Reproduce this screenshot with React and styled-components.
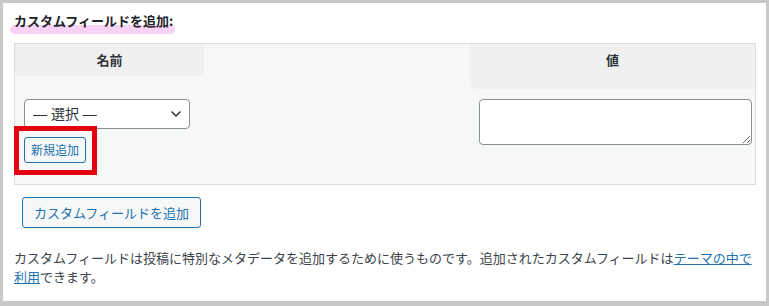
import React from 'react';
import styled, { createGlobalStyle } from 'styled-components';

const GlobalStyle = createGlobalStyle`
	html, body {
		margin: 0;
		padding: 0;
		background: #c8c8c8;
	}
	body {
		font-family: "Noto Sans CJK JP", "Noto Sans", sans-serif;
		color: #3c434a;
	}
`;

const Frame = styled.div`
	width: 769px;
	height: 306px;
	box-sizing: border-box;
	padding: 3px 3px 5px 3px;
`;

const Panel = styled.div`
	background: #fff;
	height: 100%;
	box-sizing: border-box;
	padding: 8px 10px 0 11px;
`;

const Title = styled.h4`
	position: relative;
	width: fit-content;
	margin: 0 0 13px 0;
	font-size: 13px;
	line-height: 19px;
	font-weight: 700;
	color: #1d2327;

	&::before {
		content: "";
		position: absolute;
		left: -4px;
		right: -2px;
		top: 14px;
		height: 9px;
		border-radius: 5px;
		background: #f9d3f6;
		z-index: 0;
	}

	span {
		position: relative;
		z-index: 1;
	}
`;

const Table = styled.div`
	display: grid;
	grid-template-columns: 189px 1fr 285px;
	border: 1px solid #dcdcde;
	background: #f6f7f7;
`;

const HeadCell = styled.div`
	height: ${(p) => p.$h}px;
	background: #f0f0f1;
	border-radius: ${(p) => (p.$wide ? '0 0 0 6px' : '0 0 4px 0')};
	text-align: center;
	line-height: 32px;
	font-size: 13px;
	font-weight: 700;
	color: #2c3338;
`;

const Spacer = styled.div``;

const BodyCell = styled.div`
	position: relative;
	padding: ${(p) => (p.$right ? '10px 3px 0 9px' : '10px 0 21px 9px')};
	display: flex;
	flex-direction: column;
	align-items: flex-start;
`;

const SelectWrap = styled.div`
	position: relative;
	width: 166px;
	height: 30px;

	svg {
		position: absolute;
		right: 8px;
		top: 9px;
		pointer-events: none;
	}
`;

const Select = styled.select`
	appearance: none;
	width: 100%;
	height: 100%;
	box-sizing: border-box;
	border: 1px solid #8c8f94;
	border-radius: 4px;
	background: #fff;
	padding: 0 24px 0 8px;
	font-family: "Liberation Sans", "Noto Sans CJK JP", sans-serif;
	font-size: 14px;
	color: #2c3338;
	outline: none;
`;

const Button = styled.button`
	font-family: inherit;
	font-size: ${(p) => (p.$small ? '12px' : '13px')};
	height: ${(p) => (p.$small ? '26px' : '31px')};
	padding: ${(p) => (p.$small ? '0 6px' : '0 11px')};
	margin-top: ${(p) => (p.$small ? '8px' : '0')};
	border: 1px solid #2271b1;
	border-radius: 3px;
	background: #f6f7f7;
	color: #2271b1;
	line-height: 1;
	cursor: pointer;
`;

const TextArea = styled.textarea`
	width: 100%;
	height: 46px;
	box-sizing: border-box;
	border: 1px solid #8c8f94;
	border-radius: 4px;
	background: #fff;
	font-family: inherit;
	font-size: 14px;
	padding: 4px 8px;
	margin: 0;
	display: block;
`;

const Highlight = styled.div`
	position: absolute;
	left: -1px;
	top: 37px;
	width: 83px;
	height: 49px;
	box-sizing: border-box;
	border: 5px solid #e5000f;
	pointer-events: none;
`;

const AddRow = styled.div`
	padding: 12px 0 0 8px;
`;

const Note = styled.p`
	margin: 20px 0 0 0;
	font-size: 13px;
	line-height: 19px;
	color: #3c434a;

	a {
		color: #2271b1;
		text-decoration: underline;
	}
`;

const Chevron = () => (
	<svg width="12" height="12" viewBox="0 0 12 12" fill="none">
		<path d="M2 4l4 4 4-4" stroke="#2c3338" strokeWidth="1.6" strokeLinecap="round" strokeLinejoin="round" />
	</svg>
);

const App = () => {
	return (
		<>
			<GlobalStyle />
			<Frame>
				<Panel>
					<Title><span>カスタムフィールドを追加:</span></Title>
					<Table>
						<HeadCell $h={32}>名前</HeadCell>
						<Spacer />
						<HeadCell $h={45} $wide>値</HeadCell>

						<BodyCell>
							<SelectWrap>
								<Select defaultValue="">
									<option value="">— 選択 —</option>
								</Select>
								<Chevron />
							</SelectWrap>
							<Button $small type="button">新規追加</Button>
							<Highlight />
						</BodyCell>
						<Spacer />
						<BodyCell $right>
							<TextArea />
						</BodyCell>
					</Table>
					<AddRow>
						<Button type="button">カスタムフィールドを追加</Button>
					</AddRow>
					<Note>
						カスタムフィールドは投稿に特別なメタデータを追加するために使うものです。追加されたカスタムフィールドは<a href="#">テーマの中で利用</a>できます。
					</Note>
				</Panel>
			</Frame>
		</>
	);
};

export default App;
